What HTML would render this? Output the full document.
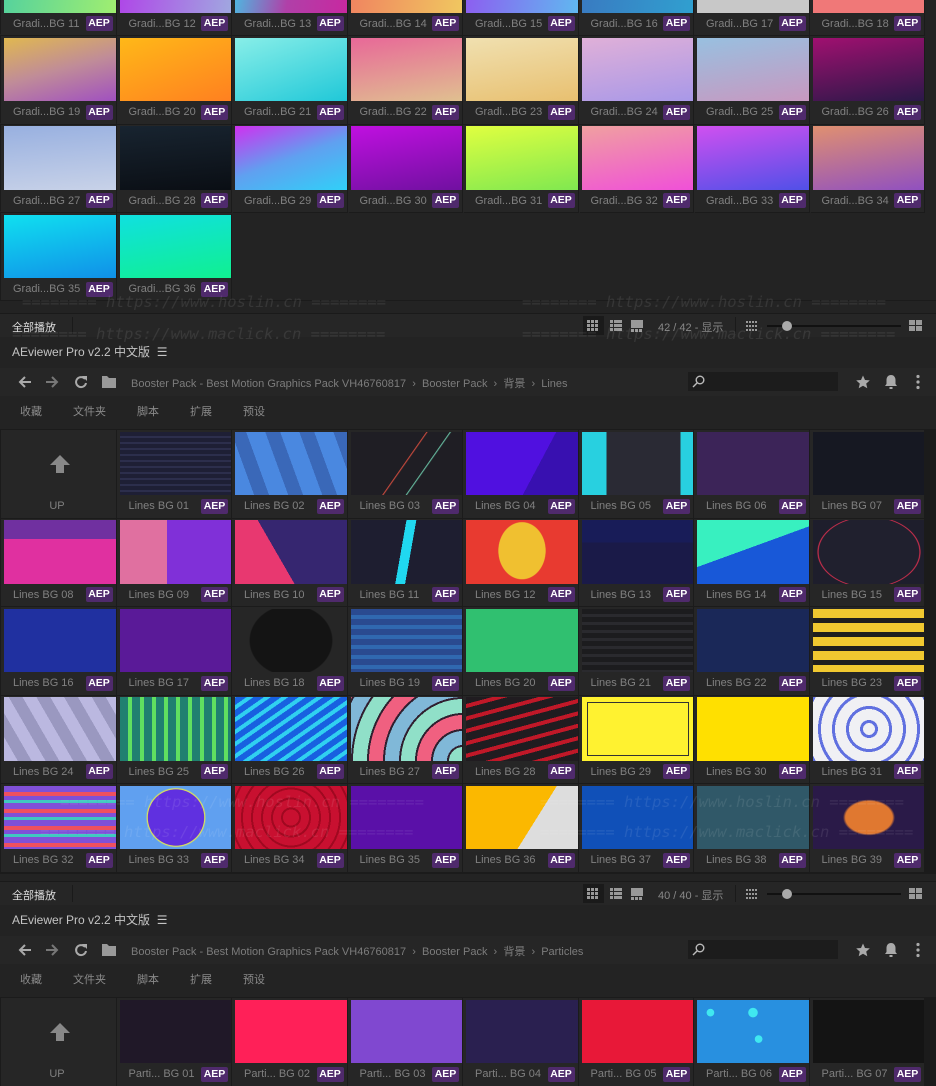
<!DOCTYPE html>
<html><head><meta charset="utf-8">
<style>
*{margin:0;padding:0;box-sizing:border-box}
body{width:936px;height:1078px;overflow:hidden;background:#232323;position:relative;font-family:"Liberation Sans","Noto Sans CJK SC",sans-serif}
.g{position:absolute;left:0;width:936px;display:grid;grid-template-columns:repeat(8,114.5px);grid-auto-rows:87.5px;gap:1px;padding-left:1px;background:#232323}
.c{position:relative;background:#262626;padding:1.5px 0 0 3px;overflow:hidden;box-shadow:1px 1px 0 #1b1b1b,-1px -1px 0 #1b1b1b}
.t{width:112px;height:63.5px;position:relative;overflow:hidden}
.n{position:absolute;left:12px;top:70px;font-size:11px;color:#808080;white-space:nowrap}
.c b{position:absolute;left:84.5px;top:68.5px;width:27px;height:15px;background:#4f2a6c;border-radius:2px;color:#fff;font-size:10.5px;line-height:15px;text-align:center;font-weight:bold}
.up{display:flex;flex-direction:column;align-items:center}
.up .a{margin-top:23px;width:0;height:0;border-left:10px solid transparent;border-right:10px solid transparent;border-bottom:10px solid #888}
.up .s{width:8px;height:8px;background:#888}
.up .u{position:absolute;top:70px;left:0;width:112px;text-align:center;font-size:11px;color:#808080}
.bar{position:absolute;left:0;width:936px}
.foot{height:24px;background:#262626;border-top:1px solid #1a1a1a}
.foot .l{position:absolute;left:12px;top:5px;font-size:11px;color:#ddd}
.foot .sep{position:absolute;top:3px;width:1px;height:17px;background:#1a1a1a}
.foot .cnt{position:absolute;left:658px;top:5px;font-size:11px;color:#888}
.hdr{font-size:12px;color:#c4c4c4;left:12px}
.nav{height:28px;background:#262626}
.crumb{position:absolute;left:131px;top:7px;font-size:11px;color:#7c7c7c;white-space:nowrap}
.search{position:absolute;left:688px;top:4px;width:150px;height:19px;background:#1c1c1c}
.tabs span{position:absolute;top:0;font-size:11px;color:#8a8a8a}
.wm{position:absolute;font-family:"DejaVu Sans Mono","Liberation Mono",monospace;font-style:italic;font-size:15.5px;color:rgba(255,255,255,0.09);white-space:pre}
</style></head><body>

<!-- GRID A -->
<div class="g" style="top:-52.5px">
<div class="c"><div class="t" style="background:linear-gradient(100deg,#50d0a0,#a0ee70)"></div><span class="n">Gradi...BG 11</span><b>AEP</b></div>
<div class="c"><div class="t" style="background:linear-gradient(100deg,#b040e8,#a0a8e0)"></div><span class="n">Gradi...BG 12</span><b>AEP</b></div>
<div class="c"><div class="t" style="background:linear-gradient(100deg,#40c8e8,#b040a8,#c828a0)"></div><span class="n">Gradi...BG 13</span><b>AEP</b></div>
<div class="c"><div class="t" style="background:linear-gradient(100deg,#f08060,#f0c860)"></div><span class="n">Gradi...BG 14</span><b>AEP</b></div>
<div class="c"><div class="t" style="background:linear-gradient(100deg,#9058f0,#60b8f0)"></div><span class="n">Gradi...BG 15</span><b>AEP</b></div>
<div class="c"><div class="t" style="background:linear-gradient(100deg,#3a78c0,#30a0d0)"></div><span class="n">Gradi...BG 16</span><b>AEP</b></div>
<div class="c"><div class="t" style="background:#c8c8c8"></div><span class="n">Gradi...BG 17</span><b>AEP</b></div>
<div class="c"><div class="t" style="background:#f07878"></div><span class="n">Gradi...BG 18</span><b>AEP</b></div>

<div class="c"><div class="t" style="background:linear-gradient(165deg,#e0b850,#c08c98,#a050c0)"></div><span class="n">Gradi...BG 19</span><b>AEP</b></div>
<div class="c"><div class="t" style="background:linear-gradient(160deg,#ffb818,#ff8020)"></div><span class="n">Gradi...BG 20</span><b>AEP</b></div>
<div class="c"><div class="t" style="background:linear-gradient(160deg,#88eee8,#20c8d8)"></div><span class="n">Gradi...BG 21</span><b>AEP</b></div>
<div class="c"><div class="t" style="background:linear-gradient(170deg,#e86898,#e0c090)"></div><span class="n">Gradi...BG 22</span><b>AEP</b></div>
<div class="c"><div class="t" style="background:linear-gradient(170deg,#f0e0b0,#e8c070)"></div><span class="n">Gradi...BG 23</span><b>AEP</b></div>
<div class="c"><div class="t" style="background:linear-gradient(170deg,#e0b0d8,#a898e8)"></div><span class="n">Gradi...BG 24</span><b>AEP</b></div>
<div class="c"><div class="t" style="background:linear-gradient(170deg,#98c0e0,#c898c0)"></div><span class="n">Gradi...BG 25</span><b>AEP</b></div>
<div class="c"><div class="t" style="background:linear-gradient(170deg,#a01070,#2a1848)"></div><span class="n">Gradi...BG 26</span><b>AEP</b></div>

<div class="c"><div class="t" style="background:linear-gradient(175deg,#98b0e0,#c8d2e8)"></div><span class="n">Gradi...BG 27</span><b>AEP</b></div>
<div class="c"><div class="t" style="background:linear-gradient(175deg,#182430,#0a0e14)"></div><span class="n">Gradi...BG 28</span><b>AEP</b></div>
<div class="c"><div class="t" style="background:linear-gradient(160deg,#d030f0,#60a0f0,#30d0f8)"></div><span class="n">Gradi...BG 29</span><b>AEP</b></div>
<div class="c"><div class="t" style="background:linear-gradient(170deg,#c010e0,#7010a0)"></div><span class="n">Gradi...BG 30</span><b>AEP</b></div>
<div class="c"><div class="t" style="background:linear-gradient(170deg,#e0ff40,#80e850)"></div><span class="n">Gradi...BG 31</span><b>AEP</b></div>
<div class="c"><div class="t" style="background:linear-gradient(170deg,#f0a0a0,#f050d8)"></div><span class="n">Gradi...BG 32</span><b>AEP</b></div>
<div class="c"><div class="t" style="background:linear-gradient(170deg,#d050f0,#5050e8)"></div><span class="n">Gradi...BG 33</span><b>AEP</b></div>
<div class="c"><div class="t" style="background:linear-gradient(170deg,#e09070,#9050c0)"></div><span class="n">Gradi...BG 34</span><b>AEP</b></div>

<div class="c"><div class="t" style="background:linear-gradient(170deg,#10e0f0,#1090e8)"></div><span class="n">Gradi...BG 35</span><b>AEP</b></div>
<div class="c"><div class="t" style="background:linear-gradient(170deg,#10e0e0,#10f090)"></div><span class="n">Gradi...BG 36</span><b>AEP</b></div>
</div>
<div class="bar" style="top:300px;height:13px;background:#232323;border-top:1px solid #1b1b1b"></div>

<!-- FOOTER 1 -->
<div class="bar foot" style="top:313px">
<span class="l">全部播放</span><div class="sep" style="left:72px"></div>
<div style="position:absolute;left:583px;top:2px;width:21px;height:19px;background:#1a1a1a"></div>
<svg style="position:absolute;left:586px;top:5px" width="14" height="14"><g fill="#999"><rect x="1" y="1" width="3" height="3"/><rect x="5" y="1" width="3" height="3"/><rect x="9" y="1" width="3" height="3"/><rect x="1" y="5" width="3" height="3"/><rect x="5" y="5" width="3" height="3"/><rect x="9" y="5" width="3" height="3"/><rect x="1" y="9" width="3" height="3"/><rect x="5" y="9" width="3" height="3"/><rect x="9" y="9" width="3" height="3"/></g></svg>
<svg style="position:absolute;left:609px;top:5px" width="14" height="14"><g fill="#999"><rect x="1" y="1" width="3" height="3"/><rect x="5" y="1" width="8" height="3"/><rect x="1" y="5" width="3" height="3"/><rect x="5" y="5" width="8" height="3"/><rect x="1" y="9" width="3" height="3"/><rect x="5" y="9" width="8" height="3"/></g></svg>
<svg style="position:absolute;left:630px;top:5px" width="14" height="14"><g fill="#999"><rect x="1" y="1" width="12" height="8"/><rect x="1" y="10" width="3" height="3"/><rect x="5" y="10" width="3" height="3"/><rect x="9" y="10" width="3" height="3"/></g></svg>
<span class="cnt">42 / 42 - 显示</span><div class="sep" style="left:735px"></div>
<svg style="position:absolute;left:746px;top:6px" width="13" height="12"><g fill="#999"><rect x="0" y="1" width="2" height="2"/><rect x="3" y="1" width="2" height="2"/><rect x="6" y="1" width="2" height="2"/><rect x="9" y="1" width="2" height="2"/><rect x="0" y="5" width="2" height="2"/><rect x="3" y="5" width="2" height="2"/><rect x="6" y="5" width="2" height="2"/><rect x="9" y="5" width="2" height="2"/><rect x="0" y="9" width="2" height="2"/><rect x="3" y="9" width="2" height="2"/><rect x="6" y="9" width="2" height="2"/><rect x="9" y="9" width="2" height="2"/></g></svg>
<div style="position:absolute;left:767px;top:11px;width:134px;height:2px;background:#111"></div>
<div style="position:absolute;left:782px;top:7px;width:10px;height:10px;border-radius:50%;background:#aaa"></div>
<svg style="position:absolute;left:909px;top:6px" width="14" height="12"><g fill="#999"><rect x="0" y="0" width="6" height="5"/><rect x="7" y="0" width="6" height="5"/><rect x="0" y="6" width="6" height="5"/><rect x="7" y="6" width="6" height="5"/></g></svg>
</div>

<!-- HEADER 1 -->
<div class="bar hdr" style="top:343px">AEviewer Pro v2.2 中文版 &nbsp;☰</div>
<div class="bar nav" style="top:368px">
<svg style="position:absolute;left:18px;top:8px" width="14" height="12"><path d="M13 6H2M7 1L2 6l5 5" stroke="#aaa" stroke-width="2" fill="none"/></svg>
<svg style="position:absolute;left:45px;top:8px" width="14" height="12"><path d="M1 6h11M7 1l5 5-5 5" stroke="#777" stroke-width="2" fill="none"/></svg>
<svg style="position:absolute;left:74px;top:7px" width="14" height="14"><path d="M11 4A5 5 0 1 0 12 8" stroke="#aaa" stroke-width="2" fill="none"/><path d="M8 1h5v5z" fill="#aaa"/></svg>
<svg style="position:absolute;left:102px;top:8px" width="14" height="12"><path d="M0 0h5l2 2h7v10H0z" fill="#999"/></svg>
<span class="crumb">Booster Pack - Best Motion Graphics Pack VH46760817 &nbsp;›&nbsp; Booster Pack &nbsp;›&nbsp; 背景 &nbsp;›&nbsp; Lines</span>
<div class="search"><svg style="position:absolute;left:4px;top:3px" width="13" height="13"><circle cx="8" cy="5" r="3.8" stroke="#bbb" stroke-width="1.4" fill="none"/><path d="M5 8L1 12" stroke="#bbb" stroke-width="1.4"/></svg></div>
<svg style="position:absolute;left:856px;top:7px" width="14" height="14"><path d="M7 0.5l2 4.5 4.8.4-3.6 3.2 1.1 4.7L7 10.8 2.7 13.3l1.1-4.7L0.2 5.4 5 5z" fill="#aaa"/></svg>
<svg style="position:absolute;left:884px;top:6px" width="14" height="16"><path d="M7 1c-3 0-4.5 2.5-4.5 5v4L1 12h12l-1.5-2V6C11.5 3.5 10 1 7 1z" fill="#aaa"/><rect x="5.5" y="13" width="3" height="2" fill="#aaa"/></svg>
<svg style="position:absolute;left:915px;top:6px" width="6" height="16"><circle cx="3" cy="2.5" r="1.6" fill="#aaa"/><circle cx="3" cy="8" r="1.6" fill="#aaa"/><circle cx="3" cy="13.5" r="1.6" fill="#aaa"/></svg>
</div>
<div class="bar tabs" style="top:403px"><span style="left:20px">收藏</span><span style="left:73px">文件夹</span><span style="left:137px">脚本</span><span style="left:190px">扩展</span><span style="left:243px">预设</span></div>

<!-- GRID B -->
<div class="g" style="top:429px;height:446px;border-top:1px solid #1b1b1b;background:#1b1b1b">
<div class="c up"><div class="a"></div><div class="s"></div><span class="u">UP</span></div>
<div class="c"><div class="t" style="background:repeating-linear-gradient(#1e1f35 0 4px,#2c2e4c 4px 6px)"></div><span class="n">Lines BG 01</span><b>AEP</b></div>
<div class="c"><div class="t" style="background:repeating-linear-gradient(70deg,#4a88e0 0 18px,#3a68b8 18px 32px)"></div><span class="n">Lines BG 02</span><b>AEP</b></div>
<div class="c"><div class="t" style="background:linear-gradient(125deg,transparent 48%,#e05040 48.5%,transparent 49.5%),linear-gradient(125deg,transparent 63%,#70d0b0 63.5%,transparent 64.5%),#1f1e24"></div><span class="n">Lines BG 03</span><b>AEP</b></div>
<div class="c"><div class="t" style="background:linear-gradient(118deg,#5010e0 62%,#3810b0 62%)"></div><span class="n">Lines BG 04</span><b>AEP</b></div>
<div class="c"><div class="t" style="background:linear-gradient(to right,#28d0e0 22%,#2a2a34 22%,#2a2a34 88%,#28d0e0 88%)"></div><span class="n">Lines BG 05</span><b>AEP</b></div>
<div class="c"><div class="t" style="background:#3c2458"></div><span class="n">Lines BG 06</span><b>AEP</b></div>
<div class="c"><div class="t" style="background:#161822"></div><span class="n">Lines BG 07</span><b>AEP</b></div>

<div class="c"><div class="t" style="background:linear-gradient(#7030a0 30%,#e030a0 30%)"></div><span class="n">Lines BG 08</span><b>AEP</b></div>
<div class="c"><div class="t" style="background:linear-gradient(to right,#e070a0 42%,#8030d8 42%)"></div><span class="n">Lines BG 09</span><b>AEP</b></div>
<div class="c"><div class="t" style="background:linear-gradient(60deg,#e83870 40%,#362670 40%)"></div><span class="n">Lines BG 10</span><b>AEP</b></div>
<div class="c"><div class="t" style="background:linear-gradient(100deg,transparent 45%,#20d8f0 45%,#20d8f0 53%,transparent 53%),#1e1e30"></div><span class="n">Lines BG 11</span><b>AEP</b></div>
<div class="c"><div class="t" style="background:radial-gradient(ellipse 24px 29px at 50% 48%,#f0c030 97%,transparent 100%),#e83a30"></div><span class="n">Lines BG 12</span><b>AEP</b></div>
<div class="c"><div class="t" style="background:linear-gradient(#181c58 35%,#1a1a48 35%)"></div><span class="n">Lines BG 13</span><b>AEP</b></div>
<div class="c"><div class="t" style="background:linear-gradient(160deg,#38f0c0 45%,#1858d8 45%)"></div><span class="n">Lines BG 14</span><b>AEP</b></div>
<div class="c"><div class="t" style="background:radial-gradient(ellipse 52px 36px at 50% 50%,#20202e 96%,#e03050 98%,transparent 100%),#1e1e2c"></div><span class="n">Lines BG 15</span><b>AEP</b></div>

<div class="c"><div class="t" style="background:#2030a0"></div><span class="n">Lines BG 16</span><b>AEP</b></div>
<div class="c"><div class="t" style="background:#5a1a98"></div><span class="n">Lines BG 17</span><b>AEP</b></div>
<div class="c"><div class="t" style="background:radial-gradient(ellipse 42px 36px,#141414 97%,#262626 100%)"></div><span class="n">Lines BG 18</span><b>AEP</b></div>
<div class="c"><div class="t" style="background:repeating-linear-gradient(#2a4a90 0 6px,#3068b0 6px 10px)"></div><span class="n">Lines BG 19</span><b>AEP</b></div>
<div class="c"><div class="t" style="background:#30c070"></div><span class="n">Lines BG 20</span><b>AEP</b></div>
<div class="c"><div class="t" style="background:repeating-linear-gradient(#1c1c1e 0 5px,#2a2a2e 5px 8px)"></div><span class="n">Lines BG 21</span><b>AEP</b></div>
<div class="c"><div class="t" style="background:#1a2858"></div><span class="n">Lines BG 22</span><b>AEP</b></div>
<div class="c"><div class="t" style="background:repeating-linear-gradient(#f0c830 0 9px,#1e1e1e 9px 14px)"></div><span class="n">Lines BG 23</span><b>AEP</b></div>

<div class="c"><div class="t" style="background:repeating-linear-gradient(60deg,#bbb8e0 0 12px,#9a98c0 12px 24px)"></div><span class="n">Lines BG 24</span><b>AEP</b></div>
<div class="c"><div class="t" style="background:repeating-linear-gradient(90deg,#208070 0 8px,#60e060 8px 12px)"></div><span class="n">Lines BG 25</span><b>AEP</b></div>
<div class="c"><div class="t" style="background:repeating-linear-gradient(-35deg,#1860e0 0 6px,#30d0f0 6px 10px)"></div><span class="n">Lines BG 26</span><b>AEP</b></div>
<div class="c"><div class="t" style="background:repeating-radial-gradient(circle at 100% 100%,#90e0c8 0 14px,#302030 14px 16px,#80b8d8 16px 30px,#302030 30px 32px,#f06080 32px 46px,#302030 46px 48px)"></div><span class="n">Lines BG 27</span><b>AEP</b></div>
<div class="c"><div class="t" style="background:repeating-linear-gradient(-15deg,#201c20 0 8px,#c01828 8px 12px)"></div><span class="n">Lines BG 28</span><b>AEP</b></div>
<div class="c"><div class="t" style="background:#fff230;box-shadow:inset 0 0 0 5px #fff230,inset 0 0 0 6px #333"></div><span class="n">Lines BG 29</span><b>AEP</b></div>
<div class="c"><div class="t" style="background:#ffe000"></div><span class="n">Lines BG 30</span><b>AEP</b></div>
<div class="c"><div class="t" style="background:repeating-radial-gradient(circle at 50% 50%,#f0f0f4 0 6px,#6070e0 6px 9px,#f0f0f4 9px 14px)"></div><span class="n">Lines BG 31</span><b>AEP</b></div>

<div class="c"><div class="t" style="background:repeating-linear-gradient(#8050d8 0 6px,#f05060 6px 10px,#8050d8 10px 14px,#40c8c0 14px 17px)"></div><span class="n">Lines BG 32</span><b>AEP</b></div>
<div class="c"><div class="t" style="background:radial-gradient(circle 30px,#6030e0 93%,#f0f040 95%,#60a0f0 100%),#6030e0"></div><span class="n">Lines BG 33</span><b>AEP</b></div>
<div class="c"><div class="t" style="background:repeating-radial-gradient(circle,#c81030 0 8px,#a00820 8px 10px)"></div><span class="n">Lines BG 34</span><b>AEP</b></div>
<div class="c"><div class="t" style="background:#5a10a8"></div><span class="n">Lines BG 35</span><b>AEP</b></div>
<div class="c"><div class="t" style="background:linear-gradient(122deg,#fbb800 60%,#ddd 60%)"></div><span class="n">Lines BG 36</span><b>AEP</b></div>
<div class="c"><div class="t" style="background:#1050b8"></div><span class="n">Lines BG 37</span><b>AEP</b></div>
<div class="c"><div class="t" style="background:#305868"></div><span class="n">Lines BG 38</span><b>AEP</b></div>
<div class="c"><div class="t" style="background:radial-gradient(ellipse 26px 18px,#e07830 90%,transparent 100%),#2a1a48"></div><span class="n">Lines BG 39</span><b>AEP</b></div>
</div>
<div class="bar" style="top:873px;height:8px;background:#232323;border-top:1px solid #1b1b1b"></div>

<!-- FOOTER 2 -->
<div class="bar foot" style="top:881px">
<span class="l">全部播放</span><div class="sep" style="left:72px"></div>
<div style="position:absolute;left:583px;top:2px;width:21px;height:19px;background:#1a1a1a"></div>
<svg style="position:absolute;left:586px;top:5px" width="14" height="14"><g fill="#999"><rect x="1" y="1" width="3" height="3"/><rect x="5" y="1" width="3" height="3"/><rect x="9" y="1" width="3" height="3"/><rect x="1" y="5" width="3" height="3"/><rect x="5" y="5" width="3" height="3"/><rect x="9" y="5" width="3" height="3"/><rect x="1" y="9" width="3" height="3"/><rect x="5" y="9" width="3" height="3"/><rect x="9" y="9" width="3" height="3"/></g></svg>
<svg style="position:absolute;left:609px;top:5px" width="14" height="14"><g fill="#999"><rect x="1" y="1" width="3" height="3"/><rect x="5" y="1" width="8" height="3"/><rect x="1" y="5" width="3" height="3"/><rect x="5" y="5" width="8" height="3"/><rect x="1" y="9" width="3" height="3"/><rect x="5" y="9" width="8" height="3"/></g></svg>
<svg style="position:absolute;left:630px;top:5px" width="14" height="14"><g fill="#999"><rect x="1" y="1" width="12" height="8"/><rect x="1" y="10" width="3" height="3"/><rect x="5" y="10" width="3" height="3"/><rect x="9" y="10" width="3" height="3"/></g></svg>
<span class="cnt">40 / 40 - 显示</span><div class="sep" style="left:735px"></div>
<svg style="position:absolute;left:746px;top:6px" width="13" height="12"><g fill="#999"><rect x="0" y="1" width="2" height="2"/><rect x="3" y="1" width="2" height="2"/><rect x="6" y="1" width="2" height="2"/><rect x="9" y="1" width="2" height="2"/><rect x="0" y="5" width="2" height="2"/><rect x="3" y="5" width="2" height="2"/><rect x="6" y="5" width="2" height="2"/><rect x="9" y="5" width="2" height="2"/><rect x="0" y="9" width="2" height="2"/><rect x="3" y="9" width="2" height="2"/><rect x="6" y="9" width="2" height="2"/><rect x="9" y="9" width="2" height="2"/></g></svg>
<div style="position:absolute;left:767px;top:11px;width:134px;height:2px;background:#111"></div>
<div style="position:absolute;left:782px;top:7px;width:10px;height:10px;border-radius:50%;background:#aaa"></div>
<svg style="position:absolute;left:909px;top:6px" width="14" height="12"><g fill="#999"><rect x="0" y="0" width="6" height="5"/><rect x="7" y="0" width="6" height="5"/><rect x="0" y="6" width="6" height="5"/><rect x="7" y="6" width="6" height="5"/></g></svg>
</div>

<!-- HEADER 2 -->
<div class="bar hdr" style="top:911px">AEviewer Pro v2.2 中文版 &nbsp;☰</div>
<div class="bar nav" style="top:936px">
<svg style="position:absolute;left:18px;top:8px" width="14" height="12"><path d="M13 6H2M7 1L2 6l5 5" stroke="#aaa" stroke-width="2" fill="none"/></svg>
<svg style="position:absolute;left:45px;top:8px" width="14" height="12"><path d="M1 6h11M7 1l5 5-5 5" stroke="#777" stroke-width="2" fill="none"/></svg>
<svg style="position:absolute;left:74px;top:7px" width="14" height="14"><path d="M11 4A5 5 0 1 0 12 8" stroke="#aaa" stroke-width="2" fill="none"/><path d="M8 1h5v5z" fill="#aaa"/></svg>
<svg style="position:absolute;left:102px;top:8px" width="14" height="12"><path d="M0 0h5l2 2h7v10H0z" fill="#999"/></svg>
<span class="crumb">Booster Pack - Best Motion Graphics Pack VH46760817 &nbsp;›&nbsp; Booster Pack &nbsp;›&nbsp; 背景 &nbsp;›&nbsp; Particles</span>
<div class="search"><svg style="position:absolute;left:4px;top:3px" width="13" height="13"><circle cx="8" cy="5" r="3.8" stroke="#bbb" stroke-width="1.4" fill="none"/><path d="M5 8L1 12" stroke="#bbb" stroke-width="1.4"/></svg></div>
<svg style="position:absolute;left:856px;top:7px" width="14" height="14"><path d="M7 0.5l2 4.5 4.8.4-3.6 3.2 1.1 4.7L7 10.8 2.7 13.3l1.1-4.7L0.2 5.4 5 5z" fill="#aaa"/></svg>
<svg style="position:absolute;left:884px;top:6px" width="14" height="16"><path d="M7 1c-3 0-4.5 2.5-4.5 5v4L1 12h12l-1.5-2V6C11.5 3.5 10 1 7 1z" fill="#aaa"/><rect x="5.5" y="13" width="3" height="2" fill="#aaa"/></svg>
<svg style="position:absolute;left:915px;top:6px" width="6" height="16"><circle cx="3" cy="2.5" r="1.6" fill="#aaa"/><circle cx="3" cy="8" r="1.6" fill="#aaa"/><circle cx="3" cy="13.5" r="1.6" fill="#aaa"/></svg>
</div>
<div class="bar tabs" style="top:971px"><span style="left:20px">收藏</span><span style="left:73px">文件夹</span><span style="left:137px">脚本</span><span style="left:190px">扩展</span><span style="left:243px">预设</span></div>

<!-- GRID C -->
<div class="g" style="top:997px;border-top:1px solid #1b1b1b;background:#1b1b1b">
<div class="c up"><div class="a"></div><div class="s"></div><span class="u">UP</span></div>
<div class="c"><div class="t" style="background:#201828"></div><span class="n">Parti... BG 01</span><b>AEP</b></div>
<div class="c"><div class="t" style="background:#ff2058"></div><span class="n">Parti... BG 02</span><b>AEP</b></div>
<div class="c"><div class="t" style="background:#8048d0"></div><span class="n">Parti... BG 03</span><b>AEP</b></div>
<div class="c"><div class="t" style="background:#2a2050"></div><span class="n">Parti... BG 04</span><b>AEP</b></div>
<div class="c"><div class="t" style="background:#e81838"></div><span class="n">Parti... BG 05</span><b>AEP</b></div>
<div class="c"><div class="t" style="background:radial-gradient(circle 4px at 12% 20%,#40e8f0 90%,transparent),radial-gradient(circle 5px at 50% 20%,#40e8f0 90%,transparent),radial-gradient(circle 4px at 55% 62%,#40e8f0 90%,transparent),#2890e0"></div><span class="n">Parti... BG 06</span><b>AEP</b></div>
<div class="c"><div class="t" style="background:#141414"></div><span class="n">Parti... BG 07</span><b>AEP</b></div>
</div>

<!-- watermarks -->
<div class="wm" style="left:22px;top:293px">======== https://www.hoslin.cn ========</div>
<div class="wm" style="left:522px;top:293px">======== https://www.hoslin.cn ========</div>
<div class="wm" style="left:12px;top:325px">======== https://www.maclick.cn ========</div>
<div class="wm" style="left:522px;top:325px">======== https://www.maclick.cn ========</div>
<div class="wm" style="left:60px;top:793px">======== https://www.hoslin.cn ========</div>
<div class="wm" style="left:540px;top:793px">======== https://www.hoslin.cn ========</div>
<div class="wm" style="left:40px;top:823px">======== https://www.maclick.cn ========</div>
<div class="wm" style="left:540px;top:823px">======== https://www.maclick.cn ========</div>
</body></html>
